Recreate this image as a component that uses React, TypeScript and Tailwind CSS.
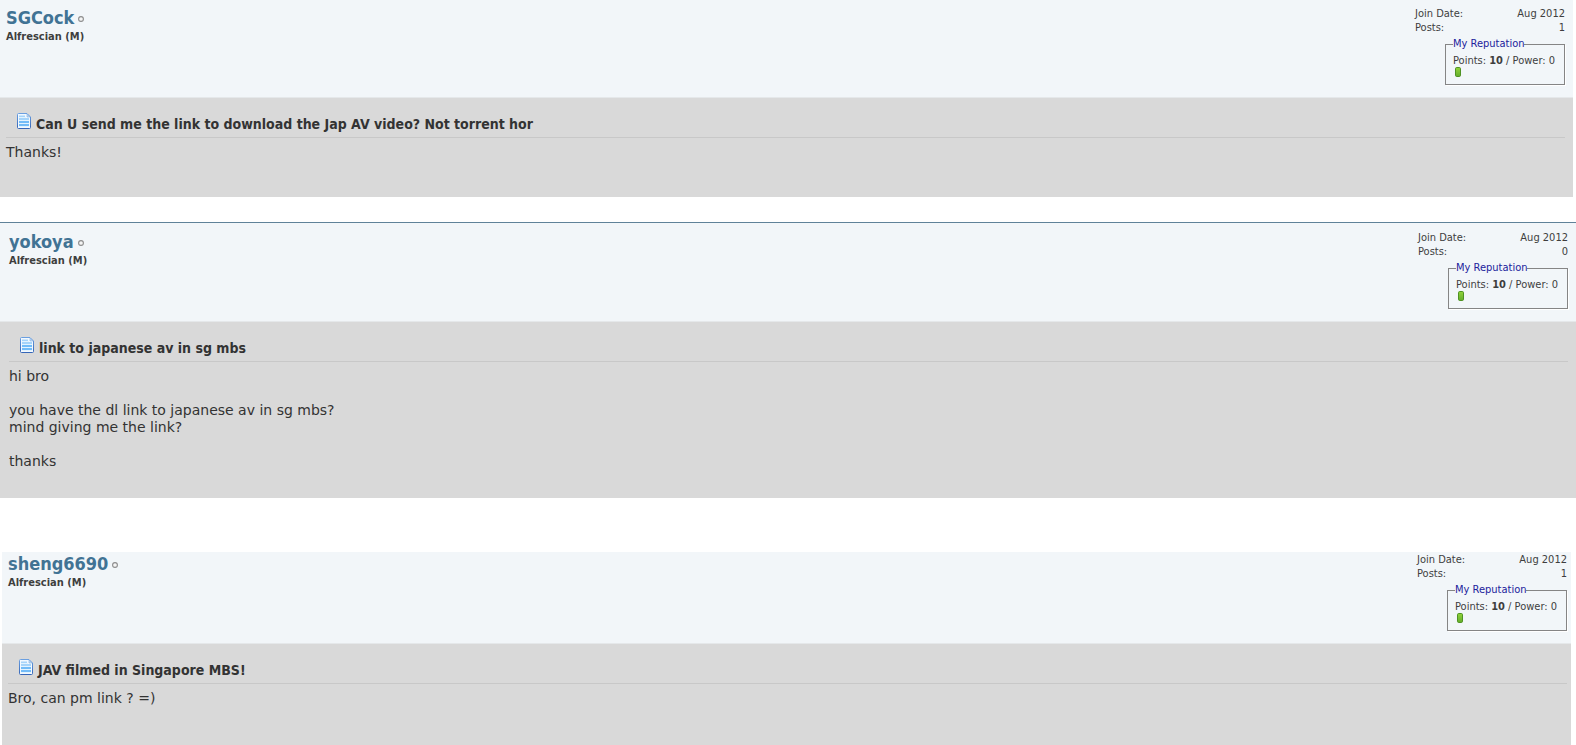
type Post = {
  id: string;
  user: string;
  posts: number;
  title: string;
  lines: string[];
  frame: string;
  headPadding: string;
  bodyPadding: string;
};

const posts: Post[] = [
  {
    id: "p1",
    user: "SGCock",
    posts: 1,
    title: "Can U send me the link to download the Jap AV video? Not torrent hor",
    lines: ["Thanks!"],
    frame: "mr-[3px]",
    headPadding: "pt-1.5 pl-1.5 pr-2",
    bodyPadding: "pl-1.5 pr-2 pb-9",
  },
  {
    id: "p2",
    user: "yokoya",
    posts: 0,
    title: "link to japanese av in sg mbs",
    lines: ["hi bro", "", "you have the dl link to japanese av in sg mbs?", "mind giving me the link?", "", "thanks"],
    frame: "mt-[25px] border-t border-[#5f8299]",
    headPadding: "pt-[7px] pl-[9px] pr-2",
    bodyPadding: "pl-[9px] pr-2 pb-7",
  },
  {
    id: "p3",
    user: "sheng6690",
    posts: 1,
    title: "JAV filmed in Singapore MBS!",
    lines: ["Bro, can pm link ? =)"],
    frame: "mt-[54px] ml-[2px] mr-[5px]",
    headPadding: "pt-0 pl-1.5 pr-1",
    bodyPadding: "pl-1.5 pr-1 pb-10",
  },
];

function NoteIcon() {
  return (
    <svg width="14" height="16" viewBox="0 0 14 16" className="shrink-0" aria-hidden="true">
      <defs>
        <linearGradient id="note-edge" x1="0" y1="0" x2="0" y2="1">
          <stop offset="0" stopColor="#6b9fe0" />
          <stop offset="1" stopColor="#3566b8" />
        </linearGradient>
      </defs>
      <path d="M1.5 .5H10L13.5 4V14.5Q13.5 15.5 12.5 15.5H1.5Q.5 15.5 .5 14.5V1.5Q.5 .5 1.5 .5Z" fill="#f2f9ff" stroke="url(#note-edge)" />
      <path d="M10 1V4H13Z" fill="#c3dcf7" stroke="#7eabdf" strokeWidth=".6" />
      <path d="M2 3.5H8M2 6H12" stroke="#a5d4fa" strokeWidth="2" />
      <path d="M2 9H12M2 12H12" stroke="#72bcf8" strokeWidth="2" />
      <path d="M2 4.5H9M2 7.5H12M2 10.5H12M2 13.5H12" stroke="#e2f3ff" strokeWidth="1" />
    </svg>
  );
}

function ReputationPip() {
  return (
    <svg width="6" height="10" viewBox="0 0 6 10" role="img" aria-label="Reputation">
      <defs>
        <linearGradient id="pip-fill" x1="0" y1="0" x2="0" y2="1">
          <stop offset="0" stopColor="#92d43a" />
          <stop offset="1" stopColor="#64ad2c" />
        </linearGradient>
      </defs>
      <rect x=".5" y=".5" width="5" height="9" rx="1.2" fill="url(#pip-fill)" stroke="#4f9224" />
    </svg>
  );
}

function PostCard({ post }: { post: Post }) {
  return (
    <article className={post.frame}>
      <header className={`flex items-start justify-between border-b border-[#e5e8ea] bg-[#f2f6f9] pb-3 ${post.headPadding}`}>
        <div className="font-bold">
          <div className="flex items-center gap-1">
            <a href={`#${post.user}`} className="text-[18px] leading-[23px] text-[#417394]">
              {post.user}
            </a>
            <svg width="6" height="6" viewBox="0 0 6 6" className="mt-[3px]" role="img" aria-label="Offline">
              <circle cx="3" cy="3" r="2.4" fill="#f5f5f5" stroke="#8c8c8c" strokeWidth="1.1" />
            </svg>
          </div>
          <div className="text-[11px] leading-4 text-[#3e3e3e]">Alfrescian (M)</div>
        </div>
        <div className="flex w-[150px] flex-col pt-px text-[11px] leading-[14px] text-[#3e3e3e]">
          <dl className="grid grid-cols-[auto_auto] justify-between">
            <dt>Join Date:</dt>
            <dd className="text-right">Aug 2012</dd>
            <dt>Posts:</dt>
            <dd className="text-right">{post.posts}</dd>
          </dl>
          <fieldset className="mt-[2px] w-[120px] self-end border border-[#858585] px-[7px] pb-1 shadow-[1px_1px_0_#ffffff]">
            <legend className="text-[#22229c]">My Reputation</legend>
            <div className="mt-1 leading-3 whitespace-nowrap">
              Points: <b>10</b> / Power: 0
            </div>
            <div className="pb-[3px] pl-[2px] *:block">
              <ReputationPip />
            </div>
          </fieldset>
        </div>
      </header>
      <div className={`bg-[#d9d9d9] pt-[15px] text-[#333333] ${post.bodyPadding}`}>
        <h2 className="flex items-start gap-[5px] border-b border-[#c8c8c8] pb-[3px] pl-[11px] text-[14px] leading-5 font-bold">
          <NoteIcon />
          <span className="mt-[1px]">{post.title}</span>
        </h2>
        <div className="pt-1.5 font-['DejaVu_Sans',sans-serif] text-[14px] leading-[17px]">
          {post.lines.map((line, i) => (
            <p key={i} className="min-h-[17px]">
              {line}
            </p>
          ))}
        </div>
      </div>
    </article>
  );
}

export default function App() {
  return (
    <main className="bg-white font-['DejaVu_Sans_Condensed','DejaVu_Sans',sans-serif]">
      {posts.map((post) => (
        <PostCard key={post.id} post={post} />
      ))}
    </main>
  );
}
